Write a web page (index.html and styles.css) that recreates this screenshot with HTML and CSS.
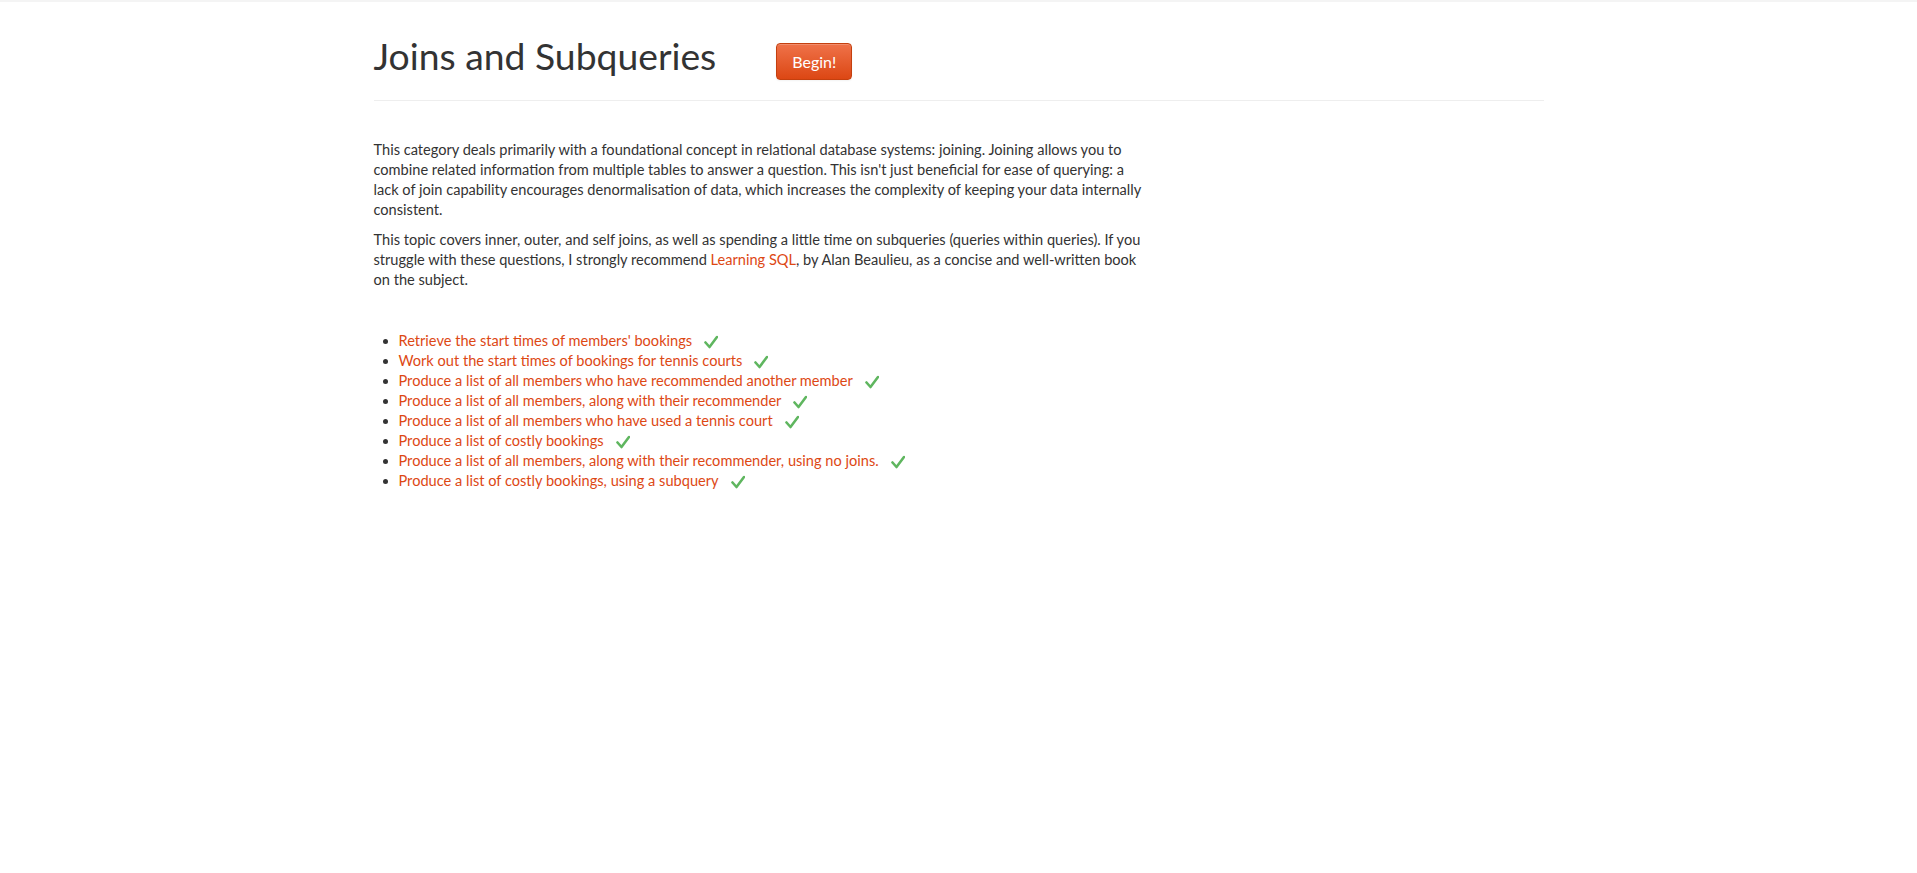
FILE: index.html
```html
<!DOCTYPE html>
<html lang="en">
<head>
<meta charset="utf-8">
<title>Joins and Subqueries</title>
<link rel="stylesheet" href="styles.css">
</head>
<body>
<div class="topline"></div>
<div class="container">
  <div class="page-header">
    <h1 class="title">Joins and Subqueries</h1>
    <a class="btn-begin" href="#">Begin!</a>
  </div>
  <div class="content">
    <p>This category deals primarily with a foundational concept in relational database systems: joining. Joining allows you to combine related information from multiple tables to answer a question. This isn't just beneficial for ease of querying: a lack of join capability encourages denormalisation of data, which increases the complexity of keeping your data internally consistent.</p>
    <p>This topic covers inner, outer, and self joins, as well as spending a little time on subqueries (queries within queries). If you struggle with these questions, I strongly recommend <a href="#">Learning SQL</a>, by Alan Beaulieu, as a concise and well-written book on the subject.</p>
    <ul class="questions">
      <li><a href="#">Retrieve the start times of members' bookings</a><svg class="check" viewBox="0 0 14 14"><path d="M1.5 7.5 L5.5 12 L13 2" /></svg></li>
      <li><a href="#">Work out the start times of bookings for tennis courts</a><svg class="check" viewBox="0 0 14 14"><path d="M1.5 7.5 L5.5 12 L13 2" /></svg></li>
      <li><a href="#">Produce a list of all members who have recommended another member</a><svg class="check" viewBox="0 0 14 14"><path d="M1.5 7.5 L5.5 12 L13 2" /></svg></li>
      <li><a href="#">Produce a list of all members, along with their recommender</a><svg class="check" viewBox="0 0 14 14"><path d="M1.5 7.5 L5.5 12 L13 2" /></svg></li>
      <li><a href="#">Produce a list of all members who have used a tennis court</a><svg class="check" viewBox="0 0 14 14"><path d="M1.5 7.5 L5.5 12 L13 2" /></svg></li>
      <li><a href="#">Produce a list of costly bookings</a><svg class="check" viewBox="0 0 14 14"><path d="M1.5 7.5 L5.5 12 L13 2" /></svg></li>
      <li><a href="#">Produce a list of all members, along with their recommender, using no joins.</a><svg class="check" viewBox="0 0 14 14"><path d="M1.5 7.5 L5.5 12 L13 2" /></svg></li>
      <li><a href="#">Produce a list of costly bookings, using a subquery</a><svg class="check" viewBox="0 0 14 14"><path d="M1.5 7.5 L5.5 12 L13 2" /></svg></li>
    </ul>
  </div>
</div>
</body>
</html>
```
FILE: styles.css
```css
html, body {
  margin: 0;
  padding: 0;
  background: #fff;
}
body {
  font-family: Lato, "Open Sans", "Liberation Sans", sans-serif;
  font-size: 14.6px;
  line-height: 20px;
  color: #333;
}
.topline {
  height: 2px;
  background: #f4f4f4;
}
.container {
  width: 1170px;
  margin: 0 auto;
}
.page-header {
  display: flex;
  align-items: flex-start;
  height: 40px;
  padding-top: 34px;
  padding-bottom: 24px;
  border-bottom: 1px solid #eeeeee;
}
.title {
  margin: 0;
  font-size: 37.3px;
  line-height: 40px;
  font-weight: 400;
  color: #333;
}
.btn-begin {
  display: flex;
  align-items: center;
  justify-content: center;
  flex: none;
  width: 76px;
  height: 37px;
  box-sizing: border-box;
  margin-left: 60px;
  margin-top: 7px;
  border: 1px solid #c4400f;
  border-radius: 4px;
  background: linear-gradient(to bottom, #ef7249, #dc4714);
  color: #fff;
  font-size: 16px;
  text-decoration: none;
  box-shadow: inset 0 1px 0 rgba(255,255,255,0.2), 0 1px 2px rgba(0,0,0,0.05);
}
.content {
  width: 770px;
  padding-top: 39px;
}
.content p {
  margin: 0 0 10px 0;
}
a {
  color: #dd4814;
  text-decoration: none;
}
.questions {
  margin: 41px 0 10px 25px;
  padding: 0;
}
.check {
  width: 14px;
  height: 14px;
  margin-left: 12px;
  vertical-align: -3px;
}
.check path {
  fill: none;
  stroke: #5fb65f;
  stroke-width: 2.6;
  stroke-linecap: round;
  stroke-linejoin: round;
}
```
